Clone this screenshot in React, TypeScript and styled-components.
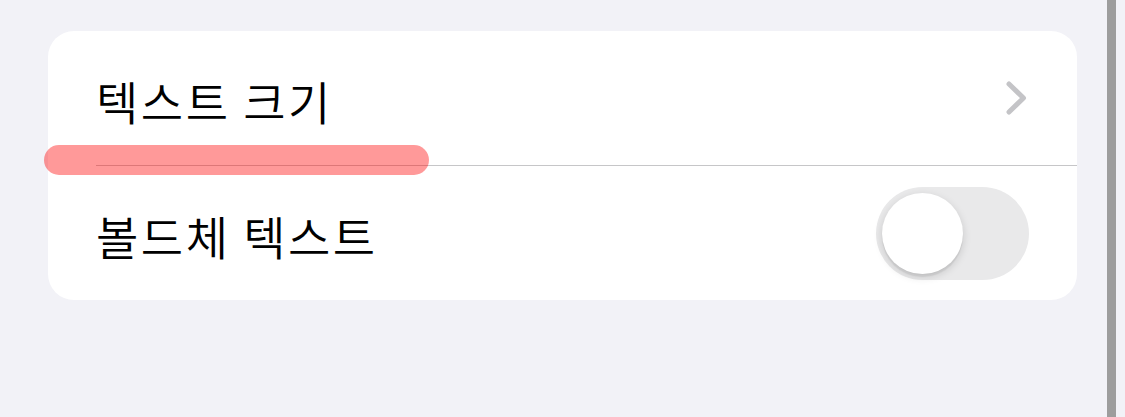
import React, { useState } from 'react';
import styled, { createGlobalStyle } from 'styled-components';

export default function App(): JSX.Element {
	const [bold, setBold] = useState(false);

	return (
		<>
			<GlobalStyle />
			<Page.Wrapper>
				<Page.Content>
					<Settings.Card>
						<Settings.Row>
							<Settings.Label>텍스트 크기</Settings.Label>
							<Chevron />
						</Settings.Row>
						<Settings.Separator />
						<Settings.Row>
							<Settings.Label>볼드체 텍스트</Settings.Label>
							<Toggle.Track
								$on={bold}
								role="switch"
								aria-checked={bold}
								onClick={() => setBold(!bold)}
							>
								<Toggle.Knob />
							</Toggle.Track>
						</Settings.Row>
						<Settings.Highlight />
					</Settings.Card>
				</Page.Content>
				<Page.ScrollBar />
			</Page.Wrapper>
		</>
	);
}

function Chevron(): JSX.Element {
	return (
		<Settings.ChevronIcon viewBox="0 0 26 38" width="26" height="38">
			<path
				d="M8 5 L22.5 19 L8 33"
				fill="none"
				stroke="#c4c4c7"
				strokeWidth="5"
				strokeLinecap="round"
				strokeLinejoin="round"
			/>
		</Settings.ChevronIcon>
	);
}

const GlobalStyle = createGlobalStyle`
	html, body {
		margin: 0;
		padding: 0;
		background: #f2f2f7;
	}

	body {
		font-family: "Noto Sans CJK KR", "Noto Sans", sans-serif;
	}
`;

namespace Page {
	export const Wrapper = styled.div`
		display: flex;
		width: 1125px;
		height: 417px;
		overflow: hidden;
		background: #f2f2f7;
	`;

	export const Content = styled.main`
		flex: 1;
		padding: 31px 30px 0 48px;
	`;

	export const ScrollBar = styled.div`
		width: 9px;
		height: 100%;
		margin-right: 9px;
		background: #9d9d9d;
	`;
}

namespace Settings {
	export const Card = styled.section`
		position: relative;
		display: flex;
		flex-direction: column;
		background: #ffffff;
		border-radius: 26px;
	`;

	export const Row = styled.div`
		display: flex;
		height: 134px;
		padding: 0 48px;

		align-items: center;
		justify-content: space-between;
	`;

	export const Label = styled.span`
		padding-top: 4px;
		color: #000000;
		font-size: 46px;
		font-weight: 350;
		line-height: 1;
		letter-spacing: 2.5px;
	`;

	export const Separator = styled.hr`
		margin: 0 0 0 48px;
		border: none;
		height: 1px;
		background: #c6c6c8;
	`;

	export const ChevronIcon = styled.svg`
		display: block;
		margin-right: 2px;
	`;

	export const Highlight = styled.span`
		position: absolute;
		left: -4px;
		top: 114px;
		width: 385px;
		height: 30px;
		border-radius: 15px;
		background: rgba(255, 0, 0, 0.4);
		pointer-events: none;
	`;
}

namespace Toggle {
	export const Track = styled.div<{ $on: boolean }>`
		display: flex;
		width: 153px;
		height: 93px;
		padding: 6px;
		box-sizing: border-box;
		border-radius: 47px;
		background: ${(p) => (p.$on ? '#34c759' : '#e9e9ea')};
		justify-content: ${(p) => (p.$on ? 'flex-end' : 'flex-start')};
		cursor: pointer;
	`;

	export const Knob = styled.span`
		display: block;
		width: 81px;
		height: 81px;
		border-radius: 50%;
		background: #ffffff;
		box-shadow:
			0 3px 8px rgba(0, 0, 0, 0.15),
			0 3px 1px rgba(0, 0, 0, 0.06);
	`;
}
